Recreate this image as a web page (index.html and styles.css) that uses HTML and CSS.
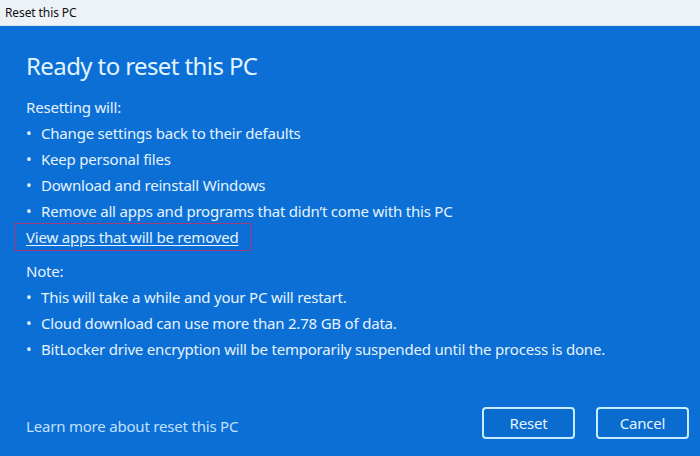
FILE: index.html
```html
<!DOCTYPE html>
<html lang="en">
<head>
<meta charset="utf-8">
<title>Reset this PC</title>
<link rel="stylesheet" href="styles.css">
</head>
<body>
<div class="window">
  <div class="titlebar">Reset this PC</div>
  <div class="main">
    <div class="content">
      <h1 class="heading">Ready to reset this PC</h1>
      <div class="line label">Resetting will:</div>
      <ul class="list">
        <li class="item"><span class="dot">•</span><span>Change settings back to their defaults</span></li>
        <li class="item"><span class="dot">•</span><span>Keep personal files</span></li>
        <li class="item"><span class="dot">•</span><span>Download and reinstall Windows</span></li>
        <li class="item"><span class="dot">•</span><span>Remove all apps and programs that didn’t come with this PC</span></li>
      </ul>
      <div class="line linkrow"><a class="applink" href="#">View apps that will be removed</a></div>
      <div class="line label note">Note:</div>
      <ul class="list">
        <li class="item"><span class="dot">•</span><span>This will take a while and your PC will restart.</span></li>
        <li class="item"><span class="dot">•</span><span>Cloud download can use more than 2.78 GB of data.</span></li>
        <li class="item"><span class="dot">•</span><span>BitLocker drive encryption will be temporarily suspended until the process is done.</span></li>
      </ul>
    </div>
    <div class="footer">
      <a class="learn" href="#">Learn more about reset this PC</a>
      <div class="buttons">
        <button class="btn">Reset</button>
        <button class="btn">Cancel</button>
      </div>
    </div>
  </div>
</div>
</body>
</html>
```
FILE: styles.css
```css
html, body {
  margin: 0;
  padding: 0;
}
body {
  width: 700px;
  height: 456px;
  overflow: hidden;
  font-family: "Noto Sans", "Open Sans", sans-serif;
}
.window {
  display: flex;
  flex-direction: column;
  height: 456px;
}
.titlebar {
  height: 26px;
  line-height: 25px;
  padding-left: 5px;
  background: #edf2f6;
  color: #111;
  font-size: 12px;
  letter-spacing: -0.1px;
  border-bottom: 1px solid #dde5ec;
  box-sizing: border-box;
}
.main {
  flex: 1;
  background: #0b6fd5;
  color: #e6f3ff;
  display: flex;
  flex-direction: column;
  padding: 0 11px 17px 26px;
  letter-spacing: -0.2px;
}
.content {
  display: flex;
  flex-direction: column;
}
.heading {
  margin: 23px 0 11px;
  font-size: 24px;
  font-weight: 400;
  line-height: 34px;
  letter-spacing: -0.6px;
  color: #e2f4ff;
}
.line {
  height: 26px;
  line-height: 26px;
  font-size: 15px;
}
.list {
  list-style: none;
  margin: 0;
  padding: 0;
}
.item {
  display: flex;
  height: 26px;
  line-height: 26px;
  font-size: 15px;
}
.dot {
  width: 15px;
  flex: none;
}
.linkrow {
  margin-left: -12px;
}
.applink {
  display: inline-block;
  box-sizing: border-box;
  height: 28px;
  line-height: 26px;
  margin-top: -1px;
  padding: 0 12px 0 11px;
  border: 1px solid #a33b7c;
  color: #e6f3ff;
  text-decoration: underline;
  text-underline-offset: 2px;
}
.note {
  margin-top: 8px;
}
.footer {
  margin-top: auto;
  display: flex;
  align-items: center;
  justify-content: space-between;
}
.learn {
  color: #c3e0ff;
  text-decoration: none;
  font-size: 15px;
  margin-top: 6px;
}
.buttons {
  display: flex;
  gap: 21px;
}
.btn {
  width: 93px;
  height: 32px;
  box-sizing: border-box;
  border: 2px solid #c8ecff;
  border-radius: 4px;
  background: #0a6cce;
  color: #e6f3ff;
  font-family: "Noto Sans", "Open Sans", sans-serif;
  font-size: 15px;
  letter-spacing: -0.2px;
  padding: 0;
}
```
